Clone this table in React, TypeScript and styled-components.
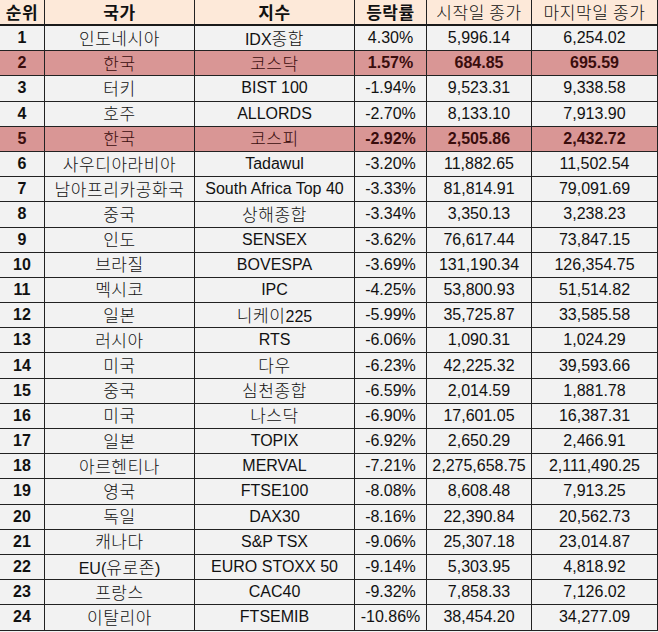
import React from "react";
import styled, { createGlobalStyle } from "styled-components";

const Global = createGlobalStyle`
  html, body { margin: 0; padding: 0; background: #ffffff; }
  body { font-family: "Liberation Sans", Arial, "Noto Sans CJK KR", sans-serif; }
`;

type Row = [number, string, string, string, string, string, boolean?];

const rows: Row[] = [
  [1, "인도네시아", "IDX종합", "4.30%", "5,996.14", "6,254.02"],
  [2, "한국", "코스닥", "1.57%", "684.85", "695.59", true],
  [3, "터키", "BIST 100", "-1.94%", "9,523.31", "9,338.58"],
  [4, "호주", "ALLORDS", "-2.70%", "8,133.10", "7,913.90"],
  [5, "한국", "코스피", "-2.92%", "2,505.86", "2,432.72", true],
  [6, "사우디아라비아", "Tadawul", "-3.20%", "11,882.65", "11,502.54"],
  [7, "남아프리카공화국", "South Africa Top 40", "-3.33%", "81,814.91", "79,091.69"],
  [8, "중국", "상해종합", "-3.34%", "3,350.13", "3,238.23"],
  [9, "인도", "SENSEX", "-3.62%", "76,617.44", "73,847.15"],
  [10, "브라질", "BOVESPA", "-3.69%", "131,190.34", "126,354.75"],
  [11, "멕시코", "IPC", "-4.25%", "53,800.93", "51,514.82"],
  [12, "일본", "니케이225", "-5.99%", "35,725.87", "33,585.58"],
  [13, "러시아", "RTS", "-6.06%", "1,090.31", "1,024.29"],
  [14, "미국", "다우", "-6.23%", "42,225.32", "39,593.66"],
  [15, "중국", "심천종합", "-6.59%", "2,014.59", "1,881.78"],
  [16, "미국", "나스닥", "-6.90%", "17,601.05", "16,387.31"],
  [17, "일본", "TOPIX", "-6.92%", "2,650.29", "2,466.91"],
  [18, "아르헨티나", "MERVAL", "-7.21%", "2,275,658.75", "2,111,490.25"],
  [19, "영국", "FTSE100", "-8.08%", "8,608.48", "7,913.25"],
  [20, "독일", "DAX30", "-8.16%", "22,390.84", "20,562.73"],
  [21, "캐나다", "S&P TSX", "-9.06%", "25,307.18", "23,014.87"],
  [22, "EU(유로존)", "EURO STOXX 50", "-9.14%", "5,303.95", "4,818.92"],
  [23, "프랑스", "CAC40", "-9.32%", "7,858.33", "7,126.02"],
  [24, "이탈리아", "FTSEMIB", "-10.86%", "38,454.20", "34,277.09"],
];

const COLS = "45px 150px 160px 72px 105px 126px";

const Table = styled.div`
  width: 658px;
  height: 632px;
  display: grid;
  grid-template-rows: 26px repeat(24, 25.2px);
  align-content: start;
  background: #f2f2f2;
`;

const HeaderRow = styled.div`
  display: grid;
  grid-template-columns: ${COLS};
  background: #fde9d9;
  border-bottom: 2px solid #1a1a1a;
  box-sizing: border-box;
`;

const BodyRow = styled.div<{ $hl?: boolean }>`
  display: grid;
  grid-template-columns: ${COLS};
  background: ${(p) => (p.$hl ? "#d99695" : "#f2f2f2")};
  color: ${(p) => (p.$hl ? "#3a0d0d" : "#111111")};
  border-bottom: 1px solid #222222;
  box-sizing: border-box;
`;

const Cell = styled.div<{ $bold?: boolean }>`
  display: flex;
  align-items: center;
  justify-content: center;
  border-right: 1px solid #222;
  box-sizing: border-box;
  font-size: 16px;
  font-weight: ${(p) => (p.$bold ? 700 : 400)};
  font-family: "Liberation Sans", Arial, "Noto Sans CJK KR", sans-serif;
  white-space: pre;
  overflow: hidden;
  line-height: 1;
`;

const Line = styled.span`
  white-space: pre;
`;

const KrText = styled.span<{ $weight?: number }>`
  font-family: "Noto Sans CJK KR", sans-serif;
  font-size: 17px;
  letter-spacing: 0.6px;
  font-weight: ${(p) => p.$weight ?? 300};
`;

const HeadCell = styled(Cell)`
  color: #111;
`;

const hasHangul = (s: string) => /[\uac00-\ud7a3]/.test(s);

const Text: React.FC<{ s: string; bold?: boolean }> = ({ s, bold }) => {
  if (!hasHangul(s)) return <Line>{s}</Line>;
  const parts = s.split(/([\uac00-\ud7a3]+)/).filter(Boolean);
  return (
    <Line>
      {parts.map((p, i) =>
        hasHangul(p) ? (
          <KrText key={i} $weight={bold ? 700 : 300}>
            {p}
          </KrText>
        ) : (
          <span key={i}>{p}</span>
        )
      )}
    </Line>
  );
};

export default function App() {
  return (
    <>
      <Global />
      <Table>
        <HeaderRow>
          <HeadCell $bold><Text s="순위" bold /></HeadCell>
          <HeadCell $bold><Text s="국가" bold /></HeadCell>
          <HeadCell $bold><Text s="지수" bold /></HeadCell>
          <HeadCell $bold><Text s="등락률" bold /></HeadCell>
          <HeadCell><Text s="시작일 종가" /></HeadCell>
          <HeadCell><Text s="마지막일 종가" /></HeadCell>
        </HeaderRow>
        {rows.map((r) => {
          const hl = !!r[6];
          return (
            <BodyRow key={r[0]} $hl={hl}>
              <Cell $bold>{r[0]}</Cell>
              <Cell><Text s={r[1]} /></Cell>
              <Cell><Text s={r[2]} /></Cell>
              <Cell $bold={hl}>{r[3]}</Cell>
              <Cell $bold={hl}>{r[4]}</Cell>
              <Cell $bold={hl}>{r[5]}</Cell>
            </BodyRow>
          );
        })}
      </Table>
    </>
  );
}
